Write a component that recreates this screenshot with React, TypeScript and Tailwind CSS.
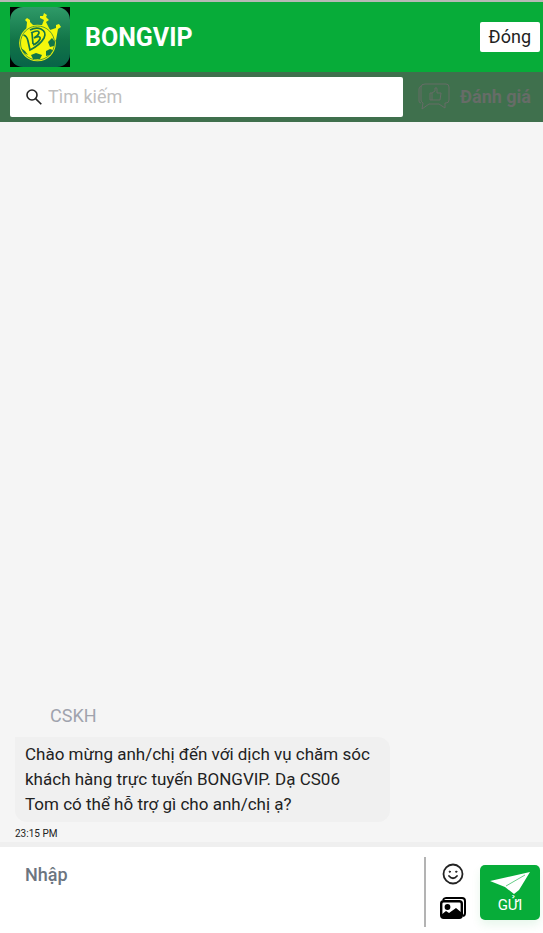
import React from 'react';

const messages = [
  {
    id: 1,
    sender: 'CSKH',
    text: 'Chào mừng anh/chị đến với dịch vụ chăm sóc\nkhách hàng trực tuyến BONGVIP. Dạ CS06\nTom có thể hỗ trợ gì cho anh/chị ạ?',
    time: '23:15 PM',
  },
];

function Logo() {
  return (
    <svg viewBox="0 0 60 60" className="size-[60px] shrink-0 bg-black" aria-label="BONGVIP" role="img">
      <defs>
        <linearGradient id="logoBg" x1="0" y1="0" x2="0" y2="1">
          <stop offset="0" stopColor="#2f9a68" />
          <stop offset="0.55" stopColor="#127548" />
          <stop offset="1" stopColor="#086448" />
        </linearGradient>
      </defs>
      <rect width="60" height="60" rx="13" fill="url(#logoBg)" />
      {/* crown */}
      <path
        d="M16 26 17 15 15 13 17 11 20 13 20 15 24 19 32 18 34 13 30 11 30 9 33 9 34 6 37 8 36 10 39 13 36 15 40 23 46 21 46 18 49 17 51 20 48 22 46 33Z"
        fill="#f4f70c"
      />
      {/* ball */}
      <circle cx="27.5" cy="36" r="18.3" fill="#f4f70c" />
      <circle cx="27.5" cy="36" r="17" fill="none" stroke="#127548" strokeWidth="0.7" />
      <path
        d="M38 35 42 31 45 35 44 39 40 40ZM36 44 40 42 43 43 40 48 36 49ZM21 48 26 46 32 48 30 52 23 52ZM11 41 15 44 18 48 14 46Z"
        fill="#127548"
      />
      {/* B mark */}
      <path d="M13.5 28Q17 29 18 34L20 43Q30 38 34 31Q37 25 31 22Q26 20 20 23" fill="none" stroke="#127548" strokeWidth="1.7" />
      <path d="M22 26 23 37M21 26Q29 22 29 26Q28 29 24 31Q31 28 30 32Q28 36 23 38" fill="none" stroke="#127548" strokeWidth="1.7" />
    </svg>
  );
}

function SearchIcon() {
  return (
    <svg viewBox="0 0 16 16" className="size-4 shrink-0" fill="none" stroke="#222" strokeWidth="1.6" aria-hidden="true">
      <circle cx="6" cy="6" r="5" />
      <path d="m9.6 9.6 5.7 5.7" />
    </svg>
  );
}

function RateIcon() {
  return (
    <svg viewBox="0 0 32 28" className="h-7 w-8 shrink-0" fill="none" stroke="currentColor" strokeWidth="1" strokeLinejoin="round" aria-hidden="true">
      <path d="M7 1H28Q31 1 31 4V17Q31 20 28 20H27V25L21 21H11L4 26 5 20Q3 19 3 17V4Q3 1 7 1Z" />
      <path d="M3 3Q1 4 1 6V18Q1 20 3 20" />
      <path d="M12 10H14V17H12ZM14 10 17 8V5Q19 4 19 6V10H23L22 17H14" />
    </svg>
  );
}

function SmileIcon() {
  return (
    <svg viewBox="0 0 22 22" className="size-[22px]" fill="none" stroke="#222" strokeWidth="1.8" strokeLinecap="round" aria-hidden="true">
      <circle cx="11" cy="11" r="9.5" />
      <path d="M7 13Q11 17.5 15 13" />
      <circle cx="7.8" cy="8.7" r="0.7" fill="#222" strokeWidth="0.8" />
      <circle cx="14.2" cy="8.7" r="0.7" fill="#222" strokeWidth="0.8" />
    </svg>
  );
}

function ImagesIcon() {
  return (
    <svg viewBox="0 0 26 22" className="h-[22px] w-[26px]" aria-hidden="true">
      <path d="M3 3Q4 1 6 1H22Q25 1 25 4V16Q25 18.5 23 19" fill="none" stroke="#000" strokeWidth="2" />
      <rect x="1.2" y="4.2" width="20.6" height="16.6" rx="2.5" fill="#fff" stroke="#000" strokeWidth="2.4" />
      <circle cx="7.5" cy="10" r="2.9" />
      <path d="M1 18 6 14 9 16 16 11 22 16V20Q22 21 20 21H3Q1 21 1 19Z" />
    </svg>
  );
}

function PlaneIcon() {
  return (
    <svg viewBox="0 0 42 24" className="h-6 w-[42px] shrink-0" aria-hidden="true">
      <path d="M1 10 41 1 30 19 25 23 16 16Z" fill="#fff" />
      <path d="m17 15 19-11" stroke="#02a938" strokeWidth="0.6" />
    </svg>
  );
}

export default function App() {
  return (
    <div className="flex min-h-screen flex-col bg-[#f5f5f5] font-['Roboto','Liberation_Sans',sans-serif] text-[#222]">
      <header className="flex items-center border-t-2 border-[#b5b9b6] bg-[#07ac39] py-[5px] pr-[3px] pl-2.5">
        <Logo />
        <h1 className="ml-[15px] flex-1 pt-0.5 text-[25px] font-bold text-white">BONGVIP</h1>
        <button type="button" className="h-[30px] rounded-[2px] bg-white px-[9px] text-lg">
          Đóng
        </button>
      </header>

      <div className="flex items-center bg-[#3f704d] py-[5px] pr-3 pl-2.5">
        <label className="flex h-10 min-w-0 flex-1 items-center gap-1.5 rounded-[2px] bg-white px-4">
          <SearchIcon />
          <input
            type="search"
            aria-label="Tìm kiếm"
            placeholder="Tìm kiếm"
            className="min-w-0 flex-1 text-lg outline-none placeholder:text-[#bfbfbf]"
          />
        </label>
        <button type="button" className="ml-[15px] flex items-center gap-2.5 text-lg font-bold text-[#666c67]">
          <RateIcon />
          Đánh giá
        </button>
      </div>

      <main className="flex flex-1 flex-col justify-end px-[15px]">
        {messages.map((message) => (
          <article key={message.id}>
            <p className="mb-[7px] pl-[35px] text-lg text-[#a0a3ad]">{message.sender}</p>
            <p className="max-w-[375px] rounded-xl rounded-tl-none bg-[#f0f0f0] px-2.5 py-[5px] text-[17px] leading-[25px] whitespace-pre-line">
              {message.text}
            </p>
            <time className="mt-1 block text-[10px] leading-4">{message.time}</time>
          </article>
        ))}
      </main>

      <footer className="flex border-t-[5px] border-[#efefef] bg-white pr-[3px] pl-[25px]">
        <textarea
          aria-label="Nhập"
          placeholder="Nhập"
          className="mt-2.5 mb-1.5 h-[70px] min-w-0 flex-1 resize-none border-r-2 border-[#b3b3b3] py-1 text-lg font-medium outline-none placeholder:text-[#6c7580]"
        />
        <div className="mx-3.5 flex flex-col items-center gap-3 pt-4">
          <button type="button" aria-label="Biểu tượng cảm xúc">
            <SmileIcon />
          </button>
          <button type="button" aria-label="Gửi hình ảnh">
            <ImagesIcon />
          </button>
        </div>
        <button
          type="button"
          className="mt-[18px] flex h-[55px] w-[60px] flex-col items-center rounded-[5px] bg-[#07ac39] pt-1.5 text-[15px] leading-5 text-white shadow-[0_5px_10px_#07ac3918]"
        >
          <PlaneIcon />
          GỬI
        </button>
      </footer>
    </div>
  );
}
